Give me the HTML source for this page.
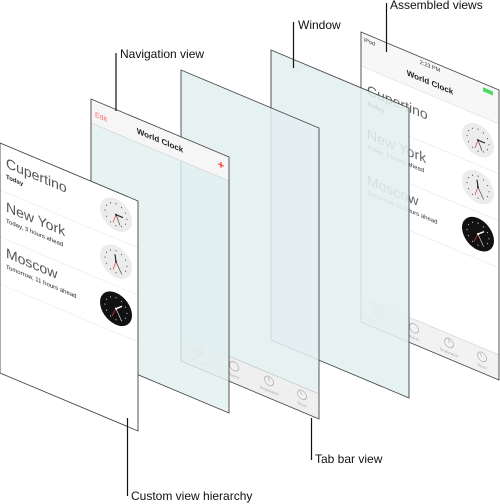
<!DOCTYPE html>
<html><head><meta charset="utf-8"><style>
html,body{margin:0;padding:0;background:#fff;}
svg{display:block;font-family:"Liberation Sans",sans-serif;}
</style></head><body>
<svg width="500" height="504" viewBox="0 0 500 504" xmlns="http://www.w3.org/2000/svg">
<defs>
<g id="dots"><circle cx="0" cy="-11" r=".6"/><circle cx="5.5" cy="-9.5" r=".6"/><circle cx="9.5" cy="-5.5" r=".6"/><circle cx="11" cy="0" r=".6"/><circle cx="9.5" cy="5.5" r=".6"/><circle cx="5.5" cy="9.5" r=".6"/><circle cx="0" cy="11" r=".6"/><circle cx="-5.5" cy="9.5" r=".6"/><circle cx="-9.5" cy="5.5" r=".6"/><circle cx="-11" cy="0" r=".6"/><circle cx="-9.5" cy="-5.5" r=".6"/><circle cx="-5.5" cy="-9.5" r=".6"/></g>
<g id="lclock"><circle r="16" fill="#ececec"/><g fill="#555"><use href="#dots"/></g><line x1="0" y1="0" x2="7" y2="0" stroke="#222" stroke-width="1.2"/><line x1="0" y1="0" x2="4" y2="9" stroke="#444" stroke-width=".8"/><line x1="0" y1="0" x2="-3" y2="9" stroke="#e33" stroke-width=".6"/><circle r="1" fill="#222"/></g>
<g id="lclock2"><circle r="16" fill="#ececec"/><g fill="#555"><use href="#dots"/></g><line x1="0" y1="0" x2="-1" y2="-7" stroke="#222" stroke-width="1.2"/><line x1="0" y1="0" x2="5" y2="9" stroke="#444" stroke-width=".8"/><line x1="0" y1="0" x2="-3" y2="9" stroke="#e33" stroke-width=".6"/><circle r="1" fill="#222"/></g>
<g id="dclock"><circle r="16" fill="#111"/><g fill="#ccc"><use href="#dots"/></g><line x1="0" y1="0" x2="6" y2="-5" stroke="#fff" stroke-width="1.2"/><line x1="0" y1="0" x2="5" y2="9" stroke="#ddd" stroke-width=".8"/><line x1="0" y1="0" x2="-4" y2="9" stroke="#e33" stroke-width=".6"/><circle r="1" fill="#fff"/></g>
<g id="tabicons" fill="none" stroke="#aaa" stroke-width=".7">
<circle cx="17" cy="274" r="4.5" stroke="#f2a8a8"/><line x1="12.5" y1="274" x2="21.5" y2="274" stroke="#f2a8a8"/><line x1="17" y1="269.5" x2="17" y2="278.5" stroke="#f2a8a8"/>
<circle cx="53" cy="274" r="4.5"/><circle cx="88" cy="274" r="4.5"/><line x1="88" y1="270" x2="88" y2="274"/><circle cx="121" cy="274" r="4.5"/><line x1="121" y1="274" x2="119" y2="271"/>
</g>
<g id="tablabels" fill="#aaa" font-size="4"><text x="17" y="285" text-anchor="middle" fill="#f2a8a8">World Clock</text><text x="53" y="285" text-anchor="middle">Alarm</text><text x="88" y="285" text-anchor="middle">Stopwatch</text><text x="121" y="285" text-anchor="middle">Timer</text></g>
</defs>

<!-- Assembled -->
<g transform="matrix(1,0.42,0,1,361,32)">
<rect x="0" y="0" width="138" height="290" fill="#fff"/>
<rect x="0" y="0" width="138" height="34" fill="#f7f7f7"/>
<line x1="0" y1="34" x2="138" y2="34" stroke="#ddd" stroke-width=".6"/>
<text x="3" y="8" font-size="5.5" fill="#333">iPod</text>
<text x="69" y="7" font-size="5.5" fill="#333" text-anchor="middle">2:23 PM</text>
<text x="69" y="24" font-size="8" font-weight="bold" fill="#222" text-anchor="middle">World Clock</text>
<rect x="122" y="4" width="10" height="4" fill="#4cd964"/>
<text x="6" y="60" font-size="14" fill="#666">Cupertino</text><text x="6" y="71" font-size="6" font-weight="bold" fill="#333">Today</text>
<line x1="0" y1="84" x2="138" y2="84" stroke="#e4e4e4" stroke-width=".6"/>
<text x="6" y="104" font-size="14" fill="#666">New York</text><text x="6" y="114" font-size="6" fill="#333">Today, 3 hours ahead</text>
<line x1="0" y1="131" x2="138" y2="131" stroke="#e4e4e4" stroke-width=".6"/>
<text x="6" y="150" font-size="14" fill="#666">Moscow</text><text x="6" y="160" font-size="6" fill="#333">Tomorrow, 11 hours ahead</text>
<line x1="0" y1="178" x2="138" y2="178" stroke="#e4e4e4" stroke-width=".6"/>
<use href="#lclock" x="117" y="59"/><use href="#lclock2" x="117" y="106"/><use href="#dclock" x="117" y="153"/>
<rect x="0" y="265" width="138" height="25" fill="#f2f2f2"/>
<line x1="0" y1="265" x2="138" y2="265" stroke="#ccc" stroke-width=".6"/>
<use href="#tabicons"/><use href="#tablabels"/>
<rect x="0" y="0" width="138" height="290" fill="none" stroke="#444" stroke-width=".9"/>
</g>

<!-- Window -->
<g transform="matrix(1,0.42,0,1,271,50)">
<rect x="0" y="0" width="138" height="290" fill="#e2eff0" fill-opacity=".88" stroke="#444" stroke-width=".9"/>
</g>

<!-- Tab bar view -->
<g transform="matrix(1,0.42,0,1,181,70)">
<rect x="0" y="0" width="138" height="291" fill="#e2eff0" fill-opacity=".85"/>
<rect x="0" y="266" width="138" height="25" fill="#efefef"/>
<line x1="0" y1="266" x2="138" y2="266" stroke="#bbb" stroke-width=".6"/>
<use href="#tabicons"/><use href="#tablabels"/>
<rect x="0" y="0" width="138" height="291" fill="none" stroke="#444" stroke-width=".9"/>
</g>

<!-- Navigation view -->
<g transform="matrix(1,0.42,0,1,91,99)">
<rect x="0" y="0" width="138" height="256" fill="#e2eff0" fill-opacity=".82"/>
<rect x="0" y="0" width="138" height="24" fill="#f6f6f6"/>
<line x1="0" y1="24" x2="138" y2="24" stroke="#ccc" stroke-width=".6"/>
<text x="4" y="16" font-size="7" fill="#f66">Edit</text>
<text x="69" y="15" font-size="8" font-weight="bold" fill="#222" text-anchor="middle">World Clock</text>
<text x="130" y="15" font-size="11" font-weight="bold" fill="#f33" text-anchor="middle">+</text>
<rect x="0" y="0" width="138" height="256" fill="none" stroke="#444" stroke-width=".9"/>
</g>

<!-- Custom view -->
<g transform="matrix(1,0.42,0,1,0,143)">
<rect x="0" y="0" width="138" height="230" fill="#fff"/>
<text x="6" y="22" font-size="14" fill="#555">Cupertino</text><text x="6" y="33" font-size="6" font-weight="bold" fill="#222">Today</text>
<line x1="0" y1="47" x2="138" y2="47" stroke="#e4e4e4" stroke-width=".6"/>
<text x="6" y="66" font-size="14" fill="#555">New York</text><text x="6" y="77" font-size="6" fill="#222">Today, 3 hours ahead</text>
<line x1="0" y1="94" x2="138" y2="94" stroke="#e4e4e4" stroke-width=".6"/>
<text x="6" y="112" font-size="14" fill="#555">Moscow</text><text x="6" y="123" font-size="6" fill="#222">Tomorrow, 11 hours ahead</text>
<line x1="0" y1="141" x2="138" y2="141" stroke="#e4e4e4" stroke-width=".6"/>
<use href="#lclock" x="116" y="23"/><use href="#lclock2" x="116" y="70"/><use href="#dclock" x="116" y="117"/>
<rect x="0" y="0" width="138" height="230" fill="none" stroke="#444" stroke-width=".9"/>
</g>

<!-- Leaders & labels -->
<g stroke="#111" stroke-width="1.2">
<line x1="116" y1="53" x2="116" y2="111"/>
<line x1="293.5" y1="22" x2="293.5" y2="68"/>
<line x1="386.5" y1="3" x2="386.5" y2="52"/>
<line x1="311.5" y1="418" x2="311.5" y2="460"/>
<line x1="127.5" y1="418" x2="127.5" y2="496"/>
</g>
<g font-size="12" fill="#111">
<text x="120" y="58">Navigation view</text>
<text x="298" y="29">Window</text>
<text x="390" y="9">Assembled views</text>
<text x="315" y="463">Tab bar view</text>
<text x="131" y="500">Custom view hierarchy</text>
</g>
</svg>
</body></html>
